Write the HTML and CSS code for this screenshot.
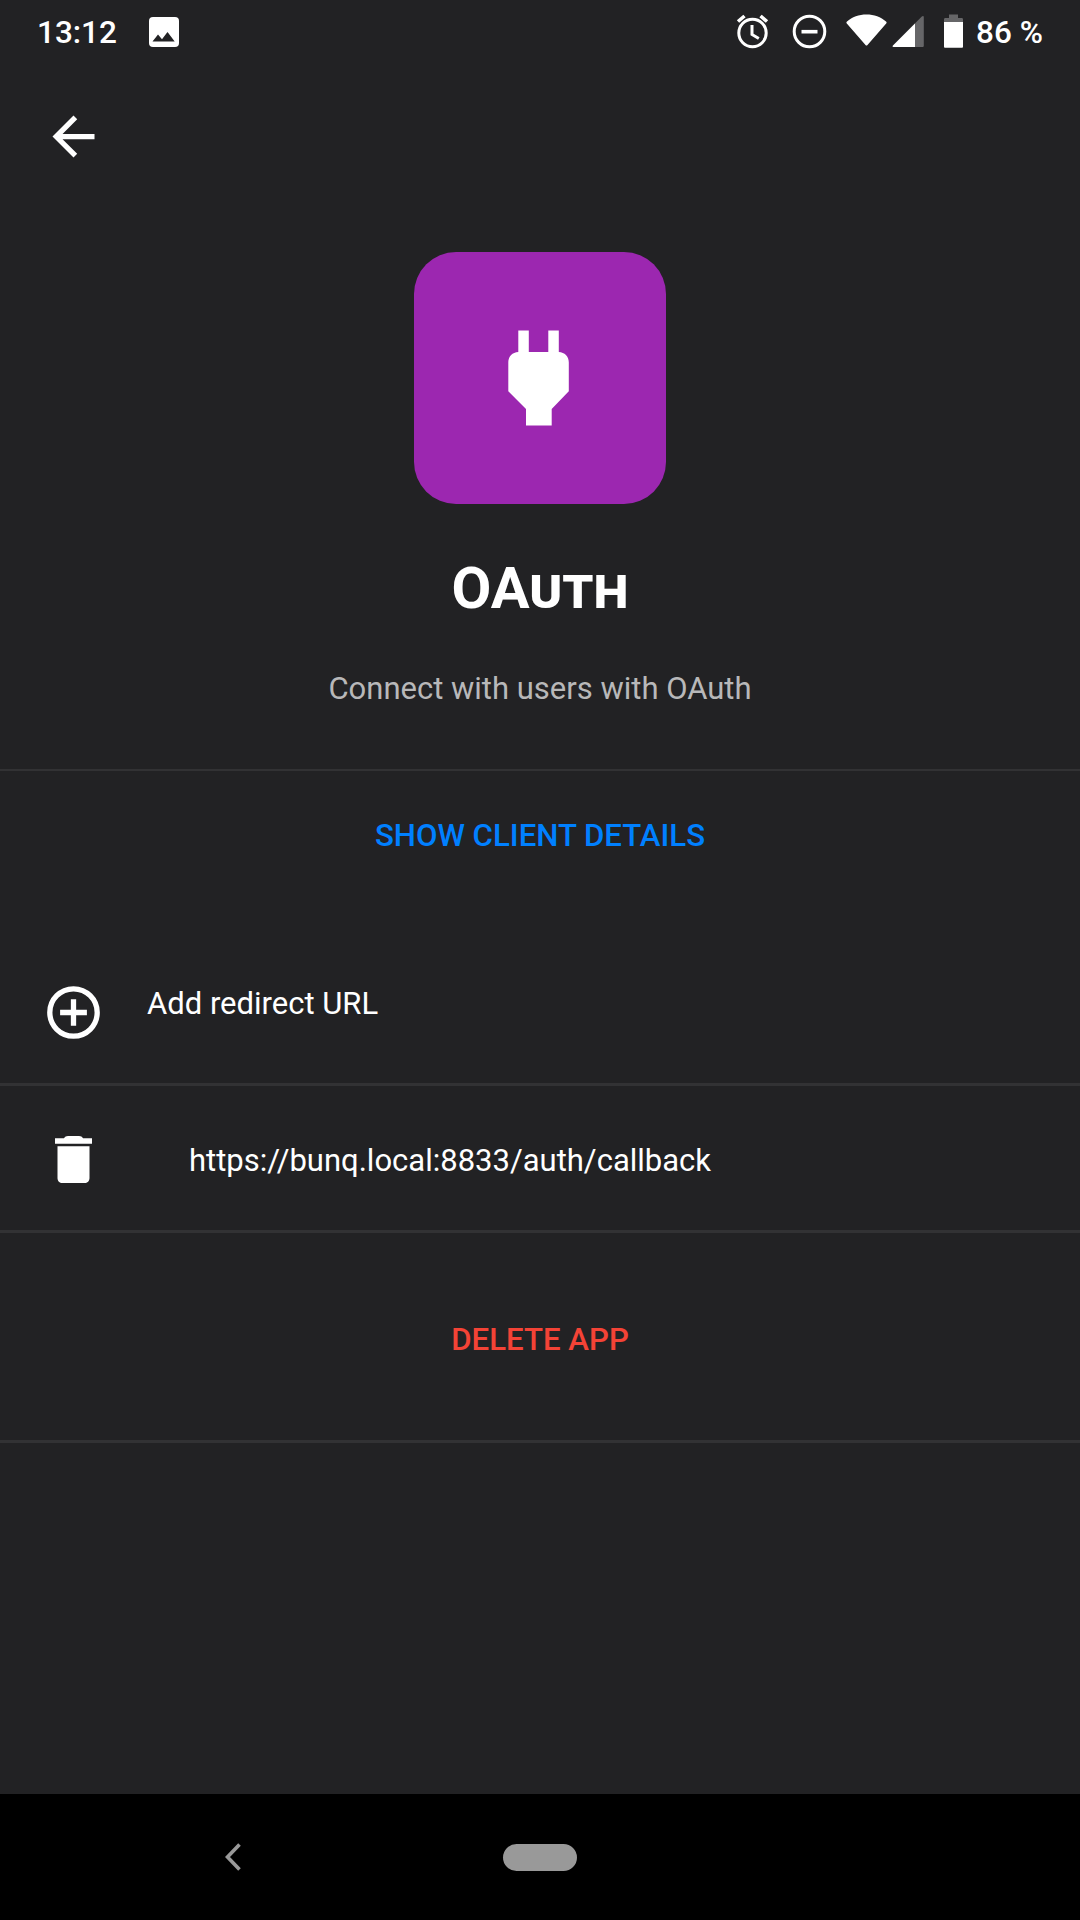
FILE: index.html
```html
<!DOCTYPE html>
<html lang="en">
<head>
<meta charset="utf-8">
<title>OAuth</title>
<link rel="stylesheet" href="styles.css">
</head>
<body>
<div class="screen">
  <header class="status">
    <span class="clock">13:12</span>
    <svg class="photo" width="32" height="32" viewBox="0 0 32 32"><rect x="1" y="1" width="30" height="30" rx="4" fill="#fff"/><path d="M4.500 25.500l5.500-7 4 4.800 5.500-7.300 7.200 9.500z" fill="#222224"/></svg>
    <svg class="indicators" width="230" height="40" viewBox="734 11 230 40">
      <g fill="none" stroke="#fff" stroke-width="3">
        <circle cx="752.5" cy="33" r="13.7"/>
        <path d="M752 25v9.500l6.800 4"/>
        <path d="M738 21.500l6.500-5.500M767 21.500l-6.500-5.500" stroke-width="3.600"/>
        <circle cx="809.500" cy="31.500" r="15.300"/>
        <path d="M801.500 31.700h16" stroke-width="3.600"/>
      </g>
      <path d="M847 21.500c5-4.500 12-7 19.500-7s14.500 2.500 19.500 7c.8.700.8 1.300.2 2L867.500 45c-.7.800-1.300.8-2 0L846.800 23.500c-.6-.7-.5-1.300.2-2z" fill="#fff"/>
      <path d="M893.500 47c-1 0-1.200-.7-.5-1.400L921.800 16.500c1-1 2-.7 2 .7V45.500c0 1-.5 1.500-1.500 1.500z" fill="#666668"/>
      <path d="M893.500 47c-1 0-1.200-.7-.5-1.400L915 23.400V47z" fill="#fff"/>
      <path d="M944 22v-2.500c0-1 .5-1.500 1.500-1.500H949v-3.500h9V18h3.500c1 0 1.500.5 1.500 1.500V22z" fill="#666668"/>
      <path d="M944 22h19v24.500c0 .9-.4 1.300-1.300 1.300h-16.400c-.9 0-1.300-.4-1.300-1.300z" fill="#fff"/>
    </svg>
    <span class="charge">86 %</span>
  </header>
  <nav class="toolbar">
    <svg width="63" height="63" viewBox="0 0 24 24"><path d="M20 11H7.830l5.590-5.590L12 4l-8 8 8 8 1.410-1.410L7.830 13H20z" fill="#fff"/></svg>
  </nav>
  <section class="hero">
    <div class="tile">
      <svg width="62" height="96" viewBox="0 0 62 96"><path d="M10.300.6h10.500V22h19.500V.6h10.500V22c5.800.2 10 4.500 10 10.500v28.800L43.700 79v16.500H18V79L.3 61.300V32.500C.3 26.500 4.500 22.200 10.300 22z" fill="#fff"/></svg>
    </div>
    <h1 class="title">OAuth</h1>
    <p class="subtitle">Connect with users with OAuth</p>
  </section>
  <button class="action show">SHOW CLIENT DETAILS</button>
  <div class="row add">
    <svg class="plus" width="64" height="64" viewBox="0 0 64 64"><g fill="none" stroke="#fff" stroke-width="5.300"><circle cx="32.500" cy="30.500" r="23.700"/><path d="M32.500 17.200v26.600M19.100 30.500h26.800"/></g></svg>
    <span class="label">Add redirect URL</span>
  </div>
  <div class="row url">
    <svg class="trash" width="64" height="64" viewBox="0 0 64 64"><path d="M14 9.300h9c1-1.500 2-2.300 4-2.300h11c2 0 3 .8 4 2.300h9v5.400H14zM16.500 17.300h32v31.700c0 3-2 5-5 5h-22c-3 0-5-2-5-5z" fill="#fff"/></svg>
    <span class="label">https://bunq.local:8833/auth/callback</span>
  </div>
  <button class="action delete">DELETE APP</button>
  <footer class="system">
    <svg class="back" width="16" height="28" viewBox="0 0 16 28"><path d="M14.500 1.500L2.500 14l12 12.500" fill="none" stroke="#999" stroke-width="3.600"/></svg>
    <span class="home"></span>
  </footer>
</div>
</body>
</html>
```
FILE: styles.css
```css
* { box-sizing: border-box; }
body { margin: 0; background: #222224; }
.screen {
  width: 1080px; height: 1920px;
  display: flex; flex-direction: column;
  font-family: Roboto, sans-serif; font-size: 31px; color: #fff;
  background: #222224; overflow: hidden;
}
svg { display: block; flex: none; }
.status { height: 64px; display: flex; align-items: center; font-size: 31.5px; font-weight: 500; flex: none; white-space: nowrap; }
.clock { width: 111px; padding-left: 37px; margin-right: 37px; }
.photo { margin-top: -1px; }
.indicators { margin: -2px 12px 0 554px; }
.toolbar { height: 144px; padding: 41px 0 0 42px; flex: none; }
.hero {
  height: 563px; padding-top: 44px; flex: none;
  display: flex; flex-direction: column; align-items: center;
  border-bottom: 2px solid #323234;
}
.tile {
  width: 252px; height: 252px; flex: none; border-radius: 42px; background: #9c27b0;
  display: flex; justify-content: center; padding: 78px 3px 0 0;
}
.title { margin: 44px 0 0; font-size: 57.8px; line-height: 80px; font-weight: 700; font-variant-caps: small-caps; }
.subtitle { margin: 41px 0 0; line-height: 40px; color: #b8b8b9; }
.action {
  border: 0; background: none; padding: 0; margin: 0; width: 100%; flex: none;
  font: 500 31.2px/40px Roboto, sans-serif; text-align: center;
}
.show { height: 129px; color: #0080ff; }
.row { display: flex; flex: none; padding-left: 41px; border-bottom: 3px solid #323234; line-height: 40px; }
.add { height: 186px; padding-top: 82px; }
.add .label { margin: 2px 0 0 42px; }
.url { height: 147px; align-items: center; padding-top: 5px; }
.url .label { margin-left: 84px; }
.delete { height: 210px; padding-top: 6px; color: #f44336; border-bottom: 3px solid #323234; }
.system { height: 126px; margin-top: auto; background: #000; display: flex; align-items: center; padding-left: 225px; flex: none; }
.home { width: 74px; height: 27px; border-radius: 14px; background: #999; margin-left: 262px; }
```
